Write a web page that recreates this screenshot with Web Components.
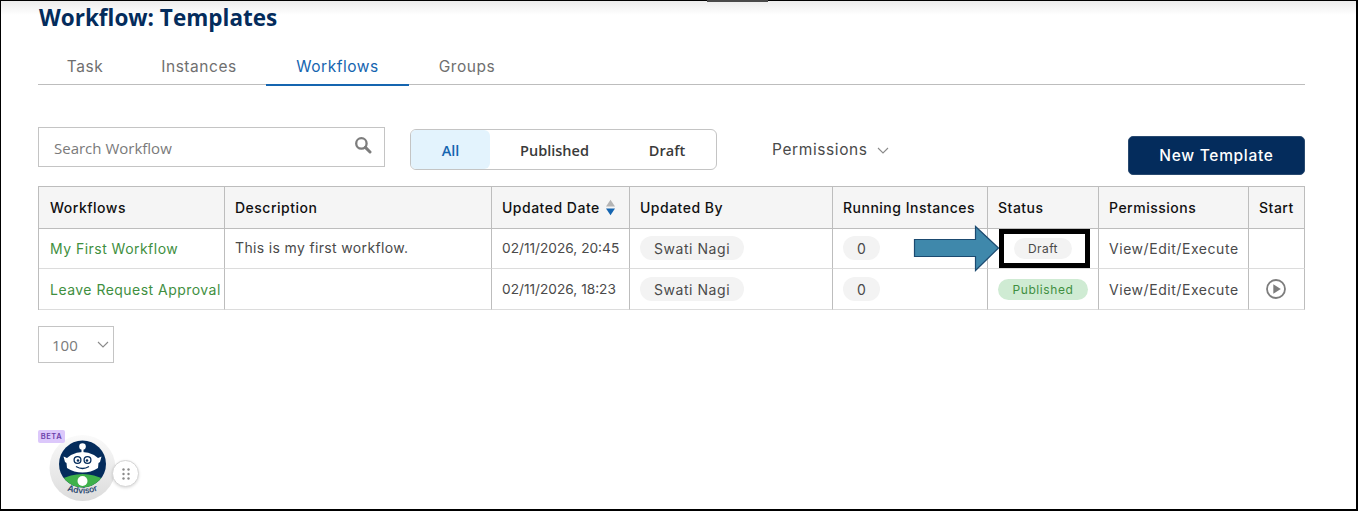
<!DOCTYPE html>
<html lang="en">
<head>
<meta charset="utf-8">
<title>Workflow: Templates</title>
<style>
  html, body { margin: 0; padding: 0; background: #fff; }
  body { width: 1358px; height: 511px; overflow: hidden; }
</style>
</head>
<body>
<wf-page>
  <wf-tabs slot="tabs">
    <wf-tab style="--w:94px">Task</wf-tab>
    <wf-tab style="--w:134px">Instances</wf-tab>
    <wf-tab style="--w:143px" active>Workflows</wf-tab>
    <wf-tab style="--w:116px">Groups</wf-tab>
  </wf-tabs>
  <wf-toolbar slot="toolbar">
    <wf-search placeholder="Search Workflow"></wf-search>
    <wf-segment></wf-segment>
    <wf-permissions>Permissions</wf-permissions>
    <wf-button>New Template</wf-button>
  </wf-toolbar>
  <wf-table slot="table">
    <wf-cell head lead>Workflows</wf-cell>
    <wf-cell head>Description</wf-cell>
    <wf-cell head sort>Updated Date</wf-cell>
    <wf-cell head>Updated By</wf-cell>
    <wf-cell head>Running Instances</wf-cell>
    <wf-cell head>Status</wf-cell>
    <wf-cell head>Permissions</wf-cell>
    <wf-cell head>Start</wf-cell>

    <wf-cell link lead>My First Workflow</wf-cell>
    <wf-cell raised>This is my first workflow.</wf-cell>
    <wf-cell date>02/11/2026, 20:45</wf-cell>
    <wf-cell><wf-pill>Swati Nagi</wf-pill></wf-cell>
    <wf-cell><wf-pill>0</wf-pill></wf-cell>
    <wf-cell><wf-pill kind="draft">Draft</wf-pill></wf-cell>
    <wf-cell>View/Edit/Execute</wf-cell>
    <wf-cell></wf-cell>

    <wf-cell link lead>Leave Request Approval</wf-cell>
    <wf-cell></wf-cell>
    <wf-cell date>02/11/2026, 18:23</wf-cell>
    <wf-cell><wf-pill>Swati Nagi</wf-pill></wf-cell>
    <wf-cell><wf-pill>0</wf-pill></wf-cell>
    <wf-cell><wf-pill kind="published">Published</wf-pill></wf-cell>
    <wf-cell>View/Edit/Execute</wf-cell>
    <wf-cell><wf-play></wf-play></wf-cell>
  </wf-table>
  <wf-pager slot="pager">100</wf-pager>
</wf-page>
<wf-callout></wf-callout>
<wf-advisor></wf-advisor>

<script>
const TEXT_FONT = '"Inter", "Open Sans", sans-serif';

class WfPage extends HTMLElement {
  constructor() {
    super();
    this.attachShadow({ mode: "open" }).innerHTML = `
      <style>
        :host {
          display: block;
          box-sizing: border-box;
          width: 1358px;
          height: 511px;
          border: 1px solid #000;
          border-bottom-width: 2px;
          border-right-width: 2px;
          padding: 0 51px 0 37px;
          font-family: ${TEXT_FONT};
          background: linear-gradient(#ececec, #fff 14px);
        }
        h1 {
          margin: 0;
          padding: 3px 0 0 1px;
          height: 41px;
          box-sizing: border-box;
          font: 700 22.5px/28px "Open Sans", sans-serif;
          color: #042c5c;
        }
        .tabs { display: block; }
        .toolbar { display: block; margin-top: 42px; }
        .table { display: block; margin-top: 11px; }
        .pager { display: block; margin-top: 16px; }
      </style>
      <h1>Workflow: Templates</h1>
      <div class="tabs"><slot name="tabs"></slot></div>
      <div class="toolbar"><slot name="toolbar"></slot></div>
      <div class="table"><slot name="table"></slot></div>
      <div class="pager"><slot name="pager"></slot></div>`;
  }
}

class WfTabs extends HTMLElement {
  constructor() {
    super();
    this.attachShadow({ mode: "open" }).innerHTML = `
      <style>
        :host { display: flex; height: 42px; border-bottom: 1px solid #bdbdbd; }
      </style>
      <slot></slot>`;
  }
}

class WfTab extends HTMLElement {
  constructor() {
    super();
    this.attachShadow({ mode: "open" }).innerHTML = `
      <style>
        :host {
          display: flex;
          align-items: center;
          justify-content: center;
          width: var(--w);
          height: 44px;
          box-sizing: border-box;
          padding-top: 4px;
          font-size: 15.5px;
          letter-spacing: .55px;
          color: #6f6f6f;
        }
        :host([active]) { color: #1565b0; border-bottom: 2px solid #1565b0; padding-top: 6px; }
      </style>
      <slot></slot>`;
  }
}

class WfToolbar extends HTMLElement {
  constructor() {
    super();
    this.attachShadow({ mode: "open" }).innerHTML = `
      <style>
        :host { display: flex; align-items: flex-start; height: 48px; }
      </style>
      <slot></slot>`;
  }
}

class WfSearch extends HTMLElement {
  constructor() {
    super();
    this.attachShadow({ mode: "open" }).innerHTML = `
      <style>
        :host {
          display: flex;
          align-items: center;
          justify-content: space-between;
          box-sizing: border-box;
          width: 347px;
          height: 40px;
          border: 1px solid #c4c4c4;
          padding: 1px 12px 0 15px;
          font: 400 15px "Open Sans", sans-serif;
          color: #7a7a7a;
        }
        svg { display: block; margin-top: -5px; }
      </style>
      <span id="ph"></span>
      <svg width="18" height="18" viewBox="0 0 18 18" fill="none" stroke="#7d7d7d">
        <circle cx="7.4" cy="7.4" r="5.2" stroke-width="2.3"/>
        <path d="M11.4 11.4 L16 16" stroke-width="3" stroke-linecap="round"/>
      </svg>`;
    this.shadowRoot.getElementById("ph").textContent = this.getAttribute("placeholder");
  }
}

class WfSegment extends HTMLElement {
  constructor() {
    super();
    this.attachShadow({ mode: "open" }).innerHTML = `
      <style>
        :host {
          display: flex;
          box-sizing: border-box;
          width: 307px;
          height: 41px;
          margin: 2px 0 0 25px;
          border: 1px solid #c4c4c4;
          border-radius: 6px;
          overflow: hidden;
          font: 600 14.5px "Open Sans", sans-serif;
          color: #3a3a3a;
        }
        span { display: flex; align-items: center; justify-content: center; padding-top: 1px; box-sizing: border-box; }
        .all { width: 79px; background: #e3f3fd; color: #1565b0; border-radius: 0 6px 6px 0; }
        .pub { width: 129px; }
        .dra { width: 96px; }
      </style>
      <span class="all">All</span><span class="pub">Published</span><span class="dra">Draft</span>`;
  }
}

class WfPermissions extends HTMLElement {
  constructor() {
    super();
    this.attachShadow({ mode: "open" }).innerHTML = `
      <style>
        :host {
          display: flex;
          align-items: center;
          gap: 9px;
          height: 44px;
          margin-left: 55px;
          font-size: 15.5px;
          letter-spacing: .6px;
          color: #4a4a4a;
        }
        svg { margin-top: 2px; }
      </style>
      <slot></slot>
      <svg width="12" height="7" viewBox="0 0 12 7" fill="none" stroke="#8a8a8a" stroke-width="1.1"><path d="M1 1 L6 6 L11 1"/></svg>`;
  }
}

class WfButton extends HTMLElement {
  constructor() {
    super();
    this.attachShadow({ mode: "open" }).innerHTML = `
      <style>
        :host {
          display: flex;
          align-items: center;
          justify-content: center;
          box-sizing: border-box;
          width: 177px;
          height: 39px;
          margin: 9px 0 0 auto;
          background: #042c5c;
          border: 1px solid #28496f;
          border-radius: 5px;
          font-size: 15.5px;
          font-weight: 500;
          letter-spacing: .7px;
          color: #fff;
        }
      </style>
      <slot></slot>`;
  }
}

class WfTable extends HTMLElement {
  constructor() {
    super();
    this.attachShadow({ mode: "open" }).innerHTML = `
      <style>
        :host {
          display: grid;
          grid-template-columns: 186px 267px 138px 203px 155px 111px 150px 56px;
          grid-template-rows: 42px 40px 41px;
          width: 1267px;
          box-sizing: border-box;
          border-top: 1px solid #bdbdbd;
          border-left: 1px solid #bdbdbd;
        }
      </style>
      <slot></slot>`;
  }
}

class WfCell extends HTMLElement {
  constructor() {
    super();
    this.attachShadow({ mode: "open" }).innerHTML = `
      <style>
        :host {
          display: flex;
          align-items: center;
          gap: 6px;
          box-sizing: border-box;
          min-width: 0;
          padding: 0 10px 1px;
          border-right: 1px solid #bdbdbd;
          border-bottom: 1px solid #dcdcdc;
          font-size: 14px;
          letter-spacing: .55px;
          color: #4a4a4a;
          white-space: nowrap;
        }
        :host(:nth-child(n+17)) { padding-bottom: 0; }
        :host([head]) { background: #f5f5f5; color: #111; border-bottom-color: #bdbdbd; font-weight: 500; letter-spacing: .5px; }
        :host([lead]) { padding-left: 11px; }
        :host([link]) { color: #3f8f3f; letter-spacing: .47px; }
        :host([date]) { letter-spacing: 0; font-size: 13.7px; }
        :host([raised]) { padding-bottom: 3px; letter-spacing: .35px; }
        svg { display: none; flex: none; }
        :host([sort]) svg { display: block; }
      </style>
      <slot></slot>
      <svg width="9" height="17" viewBox="0 0 10 17">
        <path d="M5 0 L10 7.5 H0 Z" fill="#b4b4b4"/>
        <path d="M5 17 L10 9.5 H0 Z" fill="#1565b0"/>
      </svg>`;
  }
}

class WfPill extends HTMLElement {
  constructor() {
    super();
    this.attachShadow({ mode: "open" }).innerHTML = `
      <style>
        :host {
          display: inline-flex;
          align-items: center;
          justify-content: center;
          height: 24px;
          padding: 0 14px;
          border-radius: 12px;
          background: #f3f3f3;
          color: #4a4a4a;
        }
        :host([kind]) { height: 21px; font-size: 12px; letter-spacing: .4px; }
        :host([kind="draft"]) { width: 58px; box-sizing: border-box; margin-left: 16px; padding: 0; }
        :host([kind="published"]) { width: 90px; box-sizing: border-box; padding: 0; background: #cfebd3; color: #3f8f3f; letter-spacing: .6px; }
      </style>
      <slot></slot>`;
  }
}

class WfPlay extends HTMLElement {
  constructor() {
    super();
    this.attachShadow({ mode: "open" }).innerHTML = `
      <style>:host { display: block; margin-left: 7px; } svg { display: block; }</style>
      <svg width="20" height="20" viewBox="0 0 20 20">
        <circle cx="10" cy="10" r="9" fill="none" stroke="#7d7d7d" stroke-width="1.8"/>
        <path d="M7.3 5.2 L14.8 10 L7.3 14.8 Z" fill="#7d7d7d"/>
      </svg>`;
  }
}

class WfPager extends HTMLElement {
  constructor() {
    super();
    this.attachShadow({ mode: "open" }).innerHTML = `
      <style>
        :host {
          display: flex;
          align-items: center;
          justify-content: space-between;
          box-sizing: border-box;
          width: 76px;
          height: 37px;
          padding: 0 4px 0 13px;
          border: 1px solid #c4c4c4;
          font: 400 15px "Open Sans", sans-serif;
          color: #7a7a7a;
        }
      </style>
      <slot></slot>
      <svg width="12" height="7" viewBox="0 0 12 7" fill="none" stroke="#8a8a8a" stroke-width="1.1"><path d="M1 1 L6 6 L11 1"/></svg>`;
  }
}

// annotation drawn over the table: arrow and black box around the Draft pill
class WfCallout extends HTMLElement {
  constructor() {
    super();
    this.attachShadow({ mode: "open" }).innerHTML = `
      <style>
        :host { position: absolute; left: 0; top: 0; width: 1358px; height: 511px; pointer-events: none; }
        svg { position: absolute; left: 0; top: 0; }
      </style>
      <svg width="1358" height="511" viewBox="0 0 1358 511">
        <rect x="707" y="0" width="61" height="2" fill="#4a4a4a"/>
        <path d="M914.5 239.5 H975.5 V226.5 L998.5 248 L975.5 270.5 V256.5 H914.5 Z" fill="#3f88ab" stroke="#1b4a70" stroke-width="1.2"/>
        <rect x="1001.5" y="231.5" width="86" height="34" fill="none" stroke="#000" stroke-width="5"/>
      </svg>`;
  }
}

class WfAdvisor extends HTMLElement {
  constructor() {
    super();
    this.attachShadow({ mode: "open" }).innerHTML = `
      <style>
        :host { position: absolute; left: 38px; top: 430px; width: 104px; height: 72px; }
        .beta {
          position: absolute; left: 0; top: 0; z-index: 1;
          width: 27px; height: 13px;
          background: #dcc8fb; border-radius: 2px;
          font: 600 7.5px/13px "Inter", sans-serif; letter-spacing: .6px;
          color: #6b3fa8; text-align: center;
        }
        svg.bot { position: absolute; left: 10px; top: 4px; }
        .grip {
          position: absolute; left: 74px; top: 30px;
          width: 27px; height: 27px; box-sizing: border-box;
          border-radius: 50%; background: #fff; border: 1px solid #d5d5d5;
          box-shadow: 0 1px 3px rgba(0,0,0,.15);
          display: flex; align-items: center; justify-content: center;
        }
      </style>
      <span class="beta">BETA</span>
      <svg class="bot" width="68" height="68" viewBox="0 0 68 68">
        <defs>
          <linearGradient id="halo" x1="0" y1="0" x2="0" y2="1"><stop offset="0" stop-color="#fafafa"/><stop offset="1" stop-color="#dcdcdc"/></linearGradient>
          <clipPath id="disc"><circle cx="34.500" cy="30" r="23.500"/></clipPath>
        </defs>
        <circle cx="34.500" cy="34" r="33" fill="url(#halo)"/>
        <circle cx="34.500" cy="30" r="23.500" fill="#042c5c"/>
        <g clip-path="url(#disc)">
          <ellipse cx="34.500" cy="60" rx="30" ry="20" fill="#3fb14a"/>
          <circle cx="34.500" cy="47" r="5" fill="#fff"/>
        </g>
        <circle cx="34.500" cy="12.500" r="3.300" fill="#fff"/>
        <rect x="33.500" y="14" width="2" height="6" fill="#fff"/>
        <path d="M23 21 Q34.500 15 46 21 L50 24 L53.500 22.500 L52 28 L50.500 29 L50 34 Q43 38.500 34.500 38.500 Q26 38.500 19 34 L18.500 29 L17 28 L15.500 22.500 L19 24 Z" fill="#fff"/>
        <circle cx="29.500" cy="26" r="3.400" fill="#fff" stroke="#042c5c" stroke-width="1.300"/>
        <circle cx="39.500" cy="26" r="3.400" fill="#fff" stroke="#042c5c" stroke-width="1.300"/>
        <circle cx="30" cy="26.500" r="1.300" fill="#042c5c"/>
        <circle cx="39" cy="26.500" r="1.300" fill="#042c5c"/>
        <path d="M28 32.500 Q34.500 36.500 41 32.500" fill="none" stroke="#042c5c" stroke-width="1.300"/>
        <path id="curve" d="M16 55 Q34.500 64 53 55" fill="none"/>
        <text font-family="Inter, sans-serif" font-size="8.500" font-weight="600" fill="#2c4a70" text-anchor="middle"><textPath href="#curve" startOffset="50%">Advisor</textPath></text>
      </svg>
      <span class="grip">
        <svg width="8" height="12" viewBox="0 0 8 12" fill="#8a8a8a">
          <circle cx="1.500" cy="1.500" r="1.200"/><circle cx="6.500" cy="1.500" r="1.200"/>
          <circle cx="1.500" cy="6" r="1.200"/><circle cx="6.500" cy="6" r="1.200"/>
          <circle cx="1.500" cy="10.500" r="1.200"/><circle cx="6.500" cy="10.500" r="1.200"/>
        </svg>
      </span>`;
  }
}

customElements.define("wf-page", WfPage);
customElements.define("wf-tabs", WfTabs);
customElements.define("wf-tab", WfTab);
customElements.define("wf-toolbar", WfToolbar);
customElements.define("wf-search", WfSearch);
customElements.define("wf-segment", WfSegment);
customElements.define("wf-permissions", WfPermissions);
customElements.define("wf-button", WfButton);
customElements.define("wf-table", WfTable);
customElements.define("wf-cell", WfCell);
customElements.define("wf-pill", WfPill);
customElements.define("wf-play", WfPlay);
customElements.define("wf-pager", WfPager);
customElements.define("wf-callout", WfCallout);
customElements.define("wf-advisor", WfAdvisor);
</script>
</body>
</html>
